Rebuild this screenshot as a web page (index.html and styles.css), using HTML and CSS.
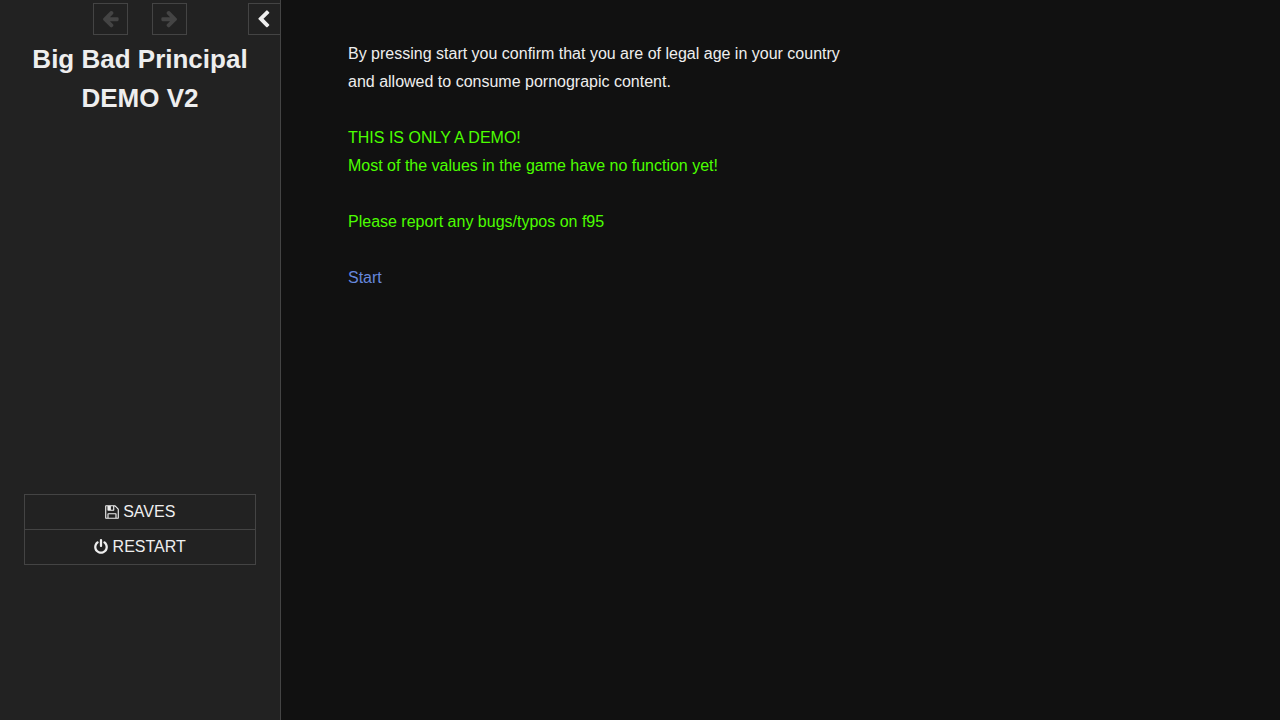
FILE: index.html
```html
<!DOCTYPE html>
<html lang="en">
<head>
    <meta charset="UTF-8">
    <meta name="viewport" content="width=device-width, initial-scale=1.0">
    <title>Big Bad Principal DEMO V2</title>
    <link rel="stylesheet" href="styles.css">
</head>
<body>
    <div class="ui-bar">
        <div class="tray">
            <div class="history">
                <button type="button" aria-label="Go backward" disabled>
                    <svg class="icon-nav" viewBox="0 0 1792 1792"><path d="M1664 896v128q0 53-32.5 90.5t-84.5 37.5h-704l293 294q38 36 38 90t-38 90l-75 76q-37 37-90 37-52 0-91-37l-651-652q-37-37-37-90 0-52 37-91l651-650q38-38 91-38 52 0 90 38l75 74q38 38 38 91t-38 91l-293 293h704q52 0 84.5 37.5t32.5 90.5z"/></svg>
                </button>
                <button type="button" aria-label="Go forward" disabled>
                    <svg class="icon-nav" viewBox="0 0 1792 1792"><path transform="translate(1792 0) scale(-1 1)" d="M1664 896v128q0 53-32.5 90.5t-84.5 37.5h-704l293 294q38 36 38 90t-38 90l-75 76q-37 37-90 37-52 0-91-37l-651-652q-37-37-37-90 0-52 37-91l651-650q38-38 91-38 52 0 90 38l75 74q38 38 38 91t-38 91l-293 293h704q52 0 84.5 37.5t32.5 90.5z"/></svg>
                </button>
            </div>
            <button type="button" class="toggle" aria-label="Toggle the UI bar">
                <svg class="icon-nav" viewBox="0 0 1792 1792"><path d="M1427 301l-531 531 531 531q19 19 19 45t-19 45l-166 166q-19 19-45 19t-45-19l-742-742q-19-19-19-45t19-45l742-742q19-19 45-19t45 19l166 166q19 19 19 45t-19 45z"/></svg>
            </button>
        </div>
        <h1>Big Bad Principal DEMO V2</h1>
        <ul class="menu">
            <li>
                <a href="#saves">
                    <svg class="icon-menu" viewBox="128 0 1536 1792"><path d="M512 1536h768v-384h-768v384zm896 0h128v-896q0-14-10-38.5t-20-34.5l-281-281q-10-10-34-20t-39-10v416q0 40-28 68t-68 28h-576q-40 0-68-28t-28-68v-416h-128v1280h128v-416q0-40 28-68t68-28h832q40 0 68 28t28 68v416zm-384-928v-320q0-13-9.5-22.5t-22.5-9.5h-192q-13 0-22.5 9.5t-9.5 22.5v320q0 13 9.5 22.5t22.5 9.5h192q13 0 22.5-9.5t9.5-22.5zm640 32v928q0 40-28 68t-68 28h-1344q-40 0-68-28t-28-68v-1344q0-40 28-68t68-28h928q40 0 88 20t76 48l280 280q28 28 48 76t20 88z"/></svg>
                    Saves
                </a>
            </li>
            <li>
                <a href="#restart">
                    <svg class="icon-menu" viewBox="128 0 1536 1792"><path d="M1664 896q0 156-61 298t-164 245-245 164-298 61-298-61-245-164-164-245-61-298q0-182 80.5-343t226.5-270q43-32 95.5-25t83.5 50q32 42 24.5 94.5t-49.5 84.5q-98 74-151.5 181t-53.5 228q0 104 40.5 198.5t109.5 163.5 163.5 109.5 198.5 40.5 198.5-40.5 163.5-109.5 109.5-163.5 40.5-198.5q0-121-53.5-228t-151.5-181q-42-32-49.5-84.5t24.5-94.5q31-43 84-50t95 25q146 109 226.5 270t80.5 343zm-640-768v640q0 52-38 90t-90 38-90-38-38-90v-640q0-52 38-90t90-38 90 38 38 90z"/></svg>
                    Restart
                </a>
            </li>
        </ul>
    </div>
    <main class="story">
        <p>By pressing start you confirm that you are of legal age in your country<br>and allowed to consume pornograpic content.</p>
        <p class="notice">THIS IS ONLY A DEMO!<br>Most of the values in the game have no function yet!</p>
        <p class="notice">Please report any bugs/typos on f95</p>
        <p><a href="#start">Start</a></p>
    </main>
</body>
</html>
```
FILE: styles.css
```css
* {
    box-sizing: border-box;
}
body {
    margin: 0;
    display: flex;
    min-height: 100vh;
    background: #111;
    color: #eee;
    font-family: Helvetica, "Liberation Sans", Arial, sans-serif;
    font-size: 16px;
    line-height: 28px;
}
a {
    color: #68d;
    text-decoration: none;
}
svg {
    fill: currentColor;
}
.ui-bar {
    flex: 0 0 281px;
    background: #222;
    border-right: 1px solid #444;
    text-align: center;
}
.tray {
    display: grid;
    grid-template-columns: 1fr auto 1fr;
    padding-top: 3px;
}
.history {
    grid-column: 2;
    display: flex;
    gap: 24px;
}
.tray button {
    display: flex;
    justify-content: center;
    align-items: center;
    width: 35px;
    height: 32px;
    padding: 0 1px 2px 0;
    background: transparent;
    border: 1px solid #444;
    color: #eee;
    cursor: pointer;
}
.tray button:disabled {
    color: #444;
    cursor: default;
}
.tray .toggle {
    justify-self: end;
    width: 32px;
    padding: 0 2px 0 0;
    border-right: none;
}
.icon-nav {
    width: 19px;
    height: 19px;
}
h1 {
    margin: 5px 24px 0;
    font-size: 26px;
    line-height: 39px;
}
.menu {
    list-style: none;
    margin: 376px 24px 0;
    padding: 0;
    border: 1px solid #444;
}
.menu li + li {
    border-top: 1px solid #444;
}
.menu a {
    display: block;
    height: 34px;
    line-height: 34px;
    color: #eee;
    text-transform: uppercase;
}
.menu a:hover {
    background: #444;
}
.icon-menu {
    width: 14px;
    height: 16px;
    vertical-align: -3px;
}
.story {
    flex: 1;
    max-width: 932px;
    padding: 40px 67px;
}
.story p {
    margin: 0 0 28px;
}
.notice {
    color: #4cff00;
}
```
